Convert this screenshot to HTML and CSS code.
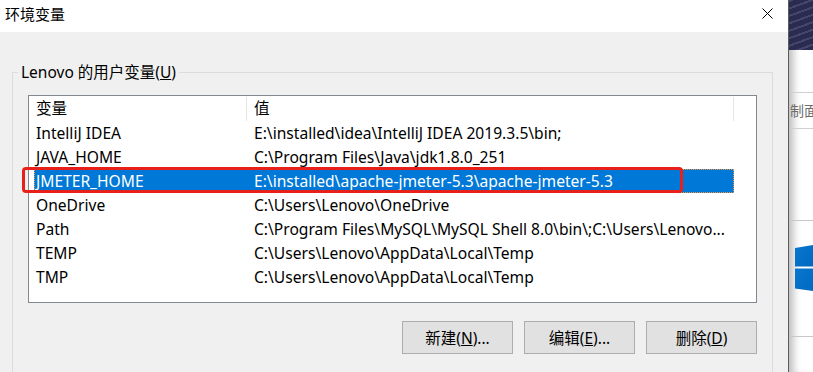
FILE: index.html
```html
<!DOCTYPE html>
<html lang="zh-CN">
<head>
<meta charset="utf-8">
<title>环境变量</title>
<link rel="stylesheet" href="styles.css">
</head>
<body>
<div class="screen">
  <div class="dialog">
    <div class="titlebar">
      <span class="title">环境变量</span>
      <svg class="close" width="11" height="11" viewBox="0 0 11 11"><path d="M0.5 0.5 L10.5 10.5 M10.5 0.5 L0.5 10.5" stroke="#000" stroke-width="1" fill="none"/></svg>
    </div>
    <div class="content">
      <fieldset class="group">
        <legend class="group-label">Lenovo 的用户变量(<u>U</u>)</legend>
        <div class="listbox">
          <div class="header">
            <div class="hcell hcell-name">变量</div>
            <div class="hsep"></div>
            <div class="hcell hcell-value">值</div>
            <div class="hsep"></div>
          </div>
          <div class="rows">
            <div class="row"><span class="c1">IntelliJ IDEA</span><span class="c2">E:\installed\idea\IntelliJ IDEA 2019.3.5\bin;</span></div>
            <div class="row"><span class="c1">JAVA_HOME</span><span class="c2">C:\Program Files\Java\jdk1.8.0_251</span></div>
            <div class="row selected"><span class="c1">JMETER_HOME</span><span class="c2">E:\installed\apache-jmeter-5.3\apache-jmeter-5.3</span></div>
            <div class="row"><span class="c1">OneDrive</span><span class="c2">C:\Users\Lenovo\OneDrive</span></div>
            <div class="row"><span class="c1">Path</span><span class="c2">C:\Program Files\MySQL\MySQL Shell 8.0\bin\;C:\Users\Lenovo...</span></div>
            <div class="row"><span class="c1">TEMP</span><span class="c2">C:\Users\Lenovo\AppData\Local\Temp</span></div>
            <div class="row"><span class="c1">TMP</span><span class="c2">C:\Users\Lenovo\AppData\Local\Temp</span></div>
          </div>
          <div class="mark"></div>
        </div>
        <div class="buttons">
          <button class="btn">新建(<u>N</u>)...</button>
          <button class="btn">编辑(<u>E</u>)...</button>
          <button class="btn">删除(<u>D</u>)</button>
        </div>
      </fieldset>
    </div>
  </div>
  <div class="side">
    <div class="wall"></div>
    <div class="side-blank side-a"></div>
    <div class="side-text"><span>制面</span></div>
    <div class="side-blank side-b"></div>
    <div class="side-logo">
      <svg width="18" height="46" viewBox="0 0 18 46">
        <defs>
          <linearGradient id="wg" x1="0" y1="0" x2="1" y2="1">
            <stop offset="0" stop-color="#0a76cf"/>
            <stop offset="1" stop-color="#0069c0"/>
          </linearGradient>
        </defs>
        <polygon points="0,3 18,0 18,21.5 0,21.5" fill="url(#wg)"/>
        <polygon points="0,23.5 18,23.5 18,46 0,43.5" fill="url(#wg)"/>
      </svg>
    </div>
    <div class="side-rest"></div>
  </div>
</div>
</body>
</html>
```

FILE: styles.css
```css
* { box-sizing: border-box; }
html, body { margin: 0; padding: 0; }
body {
  width: 813px;
  height: 372px;
  overflow: hidden;
  background: #ffffff;
  font-family: "Noto Sans", "Noto Sans CJK SC", sans-serif;
  font-size: 15px;
  color: #000;
}
.screen {
  display: flex;
  width: 813px;
  height: 372px;
}
.dialog {
  width: 788px;
  height: 372px;
  display: flex;
  flex-direction: column;
  background: #f0f0f0;
}
.titlebar {
  height: 32px;
  background: #ffffff;
  display: flex;
  align-items: center;
  justify-content: space-between;
  padding: 0 15px 0 5px;
}
.title {
  font-size: 15px;
  line-height: 20px;
  margin-top: -4px;
}
.close { display: block; margin-top: -6px; }
.content {
  flex: 1;
  overflow: hidden;
}
.group {
  margin: 30px 15px 0 12px;
  padding: 13px 15px 0 15px;
  border: 1px solid #dcdcdc;
  min-height: 330px;
  min-width: 0;
}
.group-label {
  margin-left: -10px;
  padding: 0 3px;
  line-height: 20px;
  height: 20px;
  font-size: 15.5px;
}
.listbox {
  position: relative;
  width: 729px;
  height: 208px;
  border: 1px solid #828790;
  background: #ffffff;
  font-size: 15.6px;
}
.header {
  display: flex;
  height: 25px;
  align-items: stretch;
}
.hcell {
  line-height: 25px;
  padding-left: 7px;
}
.hcell-name { width: 217px; }
.hcell-value { width: 486px; }
.hsep {
  width: 1px;
  margin-top: 1px;
  background: #e5e5e5;
}
.rows {
  padding-left: 5px;
}
.row {
  display: flex;
  width: 700px;
  height: 24px;
  line-height: 22px;
  border: 1px solid transparent;
  white-space: nowrap;
}
.row .c1 {
  width: 212px;
  padding-left: 1px;
}
.row .c2 {
  padding-left: 7px;
}
.row.selected {
  background: #0078d7;
  color: #ffffff;
  border: 1px dotted #f59a3c;
}
.mark {
  position: absolute;
  left: -7px;
  top: 71px;
  width: 661px;
  height: 26px;
  border: 3px solid #e8201a;
  border-radius: 4px;
}
.buttons {
  display: flex;
  justify-content: flex-end;
  gap: 11px;
  width: 729px;
  margin-top: 18px;
}
.btn {
  width: 111px;
  height: 33px;
  border: 1px solid #adadad;
  background: #e1e1e1;
  font-family: "Noto Sans", "Noto Sans CJK SC", sans-serif;
  font-size: 15.5px;
  color: #000;
  padding: 0;
}
.side {
  width: 25px;
  height: 372px;
  display: flex;
  flex-direction: column;
  border-left: 1px solid #5c5c5c;
  background: #ffffff;
  position: relative;
  overflow: hidden;
  box-shadow: inset 9px 0 9px -5px rgba(0, 0, 0, 0.28);
}
.wall {
  height: 50px;
  background:
    repeating-linear-gradient(160deg, rgba(120, 120, 170, 0.35) 0 2px, rgba(0, 0, 0, 0) 2px 7px),
    #2a2b4e;
}
.side-blank { background: transparent; }
.side-a {
  height: 43px;
  border-bottom: 1px solid #d0d0d0;
}
.side-text {
  height: 36px;
  border-bottom: 1px solid #d0d0d0;
  line-height: 36px;
  white-space: nowrap;
  overflow: hidden;
  color: #6d6d6d;
  font-size: 14px;
}
.side-text span { margin-left: 1px; }
.side-b { height: 92px; border-bottom: 1px solid #c8c8c8; }
.side-logo {
  height: 116px;
  padding: 24px 0 0 6px;
  border-bottom: 1px solid #c8c8c8;
}
.side-logo svg { display: block; }
.side-rest { flex: 1; }
```
